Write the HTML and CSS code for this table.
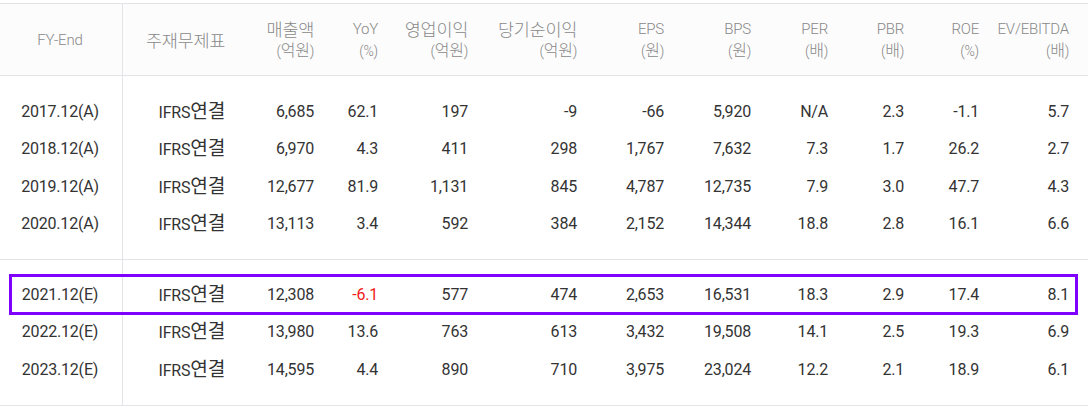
FILE: index.html
```html
<!DOCTYPE html>
<html lang="ko">
<head>
<meta charset="utf-8">
<link rel="stylesheet" href="styles.css">
</head>
<body>
<div class="table">
  <div class="row head">
    <div class="c c1"><span class="l1">FY-End</span></div>
    <div class="c"><span class="l1 ko">주재무제표</span></div>
    <div class="c"><span class="l1 ko">매출액</span><span class="l2">(<span class="ko">억원</span>)</span></div>
    <div class="c"><span class="l1">YoY</span><span class="l2">(%)</span></div>
    <div class="c"><span class="l1 ko">영업이익</span><span class="l2">(<span class="ko">억원</span>)</span></div>
    <div class="c"><span class="l1 ko">당기순이익</span><span class="l2">(<span class="ko">억원</span>)</span></div>
    <div class="c"><span class="l1">EPS</span><span class="l2">(<span class="ko">원</span>)</span></div>
    <div class="c"><span class="l1">BPS</span><span class="l2">(<span class="ko">원</span>)</span></div>
    <div class="c"><span class="l1">PER</span><span class="l2">(<span class="ko">배</span>)</span></div>
    <div class="c"><span class="l1">PBR</span><span class="l2">(<span class="ko">배</span>)</span></div>
    <div class="c"><span class="l1">ROE</span><span class="l2">(%)</span></div>
    <div class="c last"><span class="l1">EV/EBITDA</span><span class="l2">(<span class="ko">배</span>)</span></div>
  </div>
  <div class="group">
    <div class="row"><div class="c c1">2017.12(A)</div><div class="c">IFRS<span class="ko">연결</span></div><div class="c">6,685</div><div class="c">62.1</div><div class="c">197</div><div class="c">-9</div><div class="c">-66</div><div class="c">5,920</div><div class="c">N/A</div><div class="c">2.3</div><div class="c">-1.1</div><div class="c last">5.7</div></div>
    <div class="row"><div class="c c1">2018.12(A)</div><div class="c">IFRS<span class="ko">연결</span></div><div class="c">6,970</div><div class="c">4.3</div><div class="c">411</div><div class="c">298</div><div class="c">1,767</div><div class="c">7,632</div><div class="c">7.3</div><div class="c">1.7</div><div class="c">26.2</div><div class="c last">2.7</div></div>
    <div class="row"><div class="c c1">2019.12(A)</div><div class="c">IFRS<span class="ko">연결</span></div><div class="c">12,677</div><div class="c">81.9</div><div class="c">1,131</div><div class="c">845</div><div class="c">4,787</div><div class="c">12,735</div><div class="c">7.9</div><div class="c">3.0</div><div class="c">47.7</div><div class="c last">4.3</div></div>
    <div class="row"><div class="c c1">2020.12(A)</div><div class="c">IFRS<span class="ko">연결</span></div><div class="c">13,113</div><div class="c">3.4</div><div class="c">592</div><div class="c">384</div><div class="c">2,152</div><div class="c">14,344</div><div class="c">18.8</div><div class="c">2.8</div><div class="c">16.1</div><div class="c last">6.6</div></div>
  </div>
  <div class="group">
    <div class="row hl"><div class="c c1">2021.12(E)</div><div class="c">IFRS<span class="ko">연결</span></div><div class="c">12,308</div><div class="c neg">-6.1</div><div class="c">577</div><div class="c">474</div><div class="c">2,653</div><div class="c">16,531</div><div class="c">18.3</div><div class="c">2.9</div><div class="c">17.4</div><div class="c last">8.1</div></div>
    <div class="row"><div class="c c1">2022.12(E)</div><div class="c">IFRS<span class="ko">연결</span></div><div class="c">13,980</div><div class="c">13.6</div><div class="c">763</div><div class="c">613</div><div class="c">3,432</div><div class="c">19,508</div><div class="c">14.1</div><div class="c">2.5</div><div class="c">19.3</div><div class="c last">6.9</div></div>
    <div class="row"><div class="c c1">2023.12(E)</div><div class="c">IFRS<span class="ko">연결</span></div><div class="c">14,595</div><div class="c">4.4</div><div class="c">890</div><div class="c">710</div><div class="c">3,975</div><div class="c">23,024</div><div class="c">12.2</div><div class="c">2.1</div><div class="c">18.9</div><div class="c last">6.1</div></div>
  </div>
</div>
</body>
</html>
```

FILE: styles.css
```css
* { box-sizing: border-box; }
html, body { margin: 0; padding: 0; background: #fff; }
body {
  padding-top: 3px;
  font-family: Roboto, "Noto Sans CJK KR", sans-serif;
  color: #333;
  font-size: 16px;
}
.table {
  width: 1088px;
  border-top: 1px solid #e3e3e8;
}
.row {
  display: grid;
  grid-template-columns: 122px 113px 89px 64px 90px 109px 87px 87px 77px 76px 75px 99px;
  height: 37.5px;
  align-items: center;
}
.c {
  text-align: right;
  padding-right: 10px;
  white-space: nowrap;
  letter-spacing: -0.2px;
  line-height: 20px;
}
.ko {
  font-family: "Noto Sans CJK KR", sans-serif;
  font-size: 1.2em;
  letter-spacing: -0.3px;
  line-height: 1;
}
.c1 { text-align: center; padding-right: 2px; }
.last { padding-right: 19px; }
.neg { color: #f21b1b; }

.head {
  height: 72px;
  background: #fcfcfc linear-gradient(#e3e3e8, #e3e3e8) 122px 0 / 1px 100% no-repeat;
  border-bottom: 1px solid #e3e3e8;
  color: #888;
  font-weight: 300;
}
.head .c { display: flex; flex-direction: column; align-items: flex-end; }
.head .c1 { align-items: center; }
.l1 { font-size: 15px; line-height: 22px; }
.l1.ko { font-size: 17.5px; }
.l2 { font-size: 14px; line-height: 22px; }
.l2 .ko { font-size: 16px; }

.group {
  padding: 17px 0 16px;
  background: linear-gradient(#e3e3e8, #e3e3e8) 122px 0 / 1px 100% no-repeat;
  border-bottom: 1px solid #e3e3e8;
}
.group + .group { padding: 16px 0 16.5px; }
.hl { position: relative; }
.hl::after {
  content: "";
  position: absolute;
  left: 9px;
  right: 10px;
  top: -2px;
  bottom: -1px;
  border: 3px solid #8000ff;
  pointer-events: none;
}
```
